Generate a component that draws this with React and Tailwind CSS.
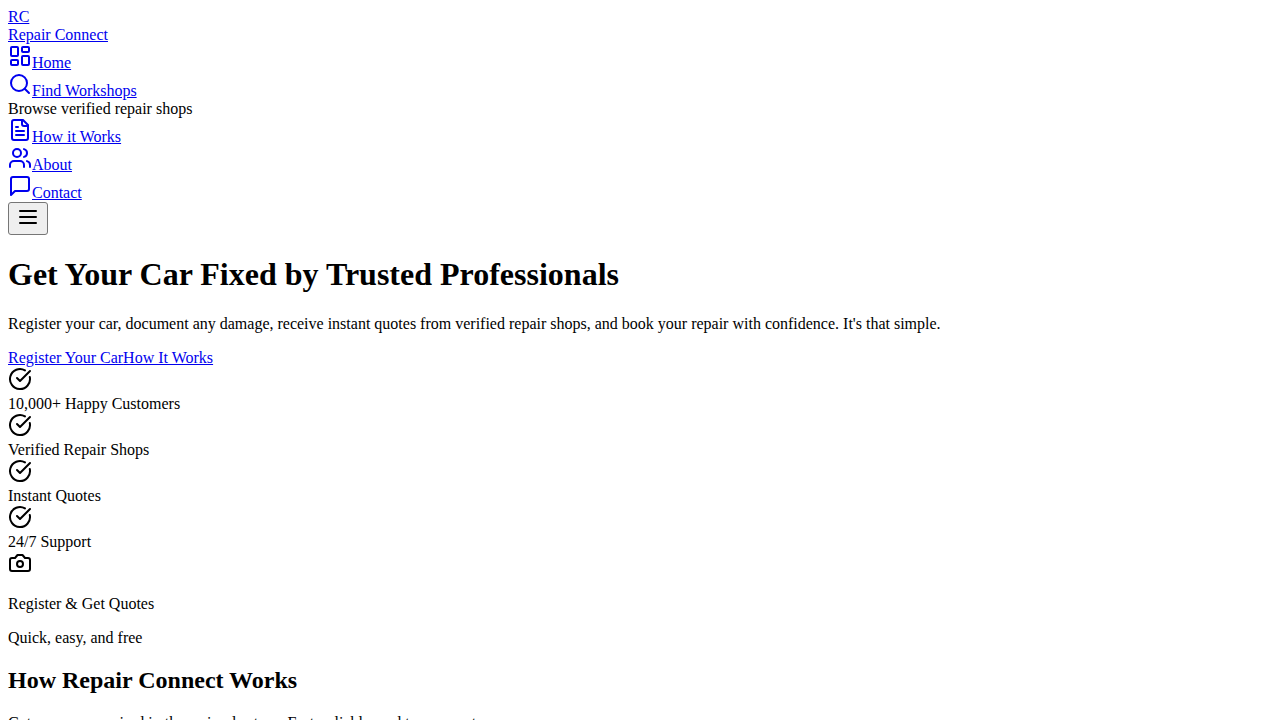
import React from "react";

function Icon({ children }) {
  return (
    <svg
      className="inline size-6 align-baseline"
      viewBox="0 0 24 24"
      fill="none"
      stroke="currentColor"
      strokeWidth="2"
      strokeLinecap="round"
      strokeLinejoin="round"
      aria-hidden="true"
    >
      {children}
    </svg>
  );
}

const icons = {
  dashboard: (
    <Icon>
      <rect width="7" height="9" x="3" y="3" rx="1" />
      <rect width="7" height="5" x="14" y="3" rx="1" />
      <rect width="7" height="9" x="14" y="12" rx="1" />
      <rect width="7" height="5" x="3" y="16" rx="1" />
    </Icon>
  ),
  search: (
    <Icon>
      <circle cx="11" cy="11" r="8" />
      <path d="m21 21-4.3-4.3" />
    </Icon>
  ),
  file: (
    <Icon>
      <path d="M15 2H6a2 2 0 0 0-2 2v16a2 2 0 0 0 2 2h12a2 2 0 0 0 2-2V7Z" />
      <path d="M14 2v4a2 2 0 0 0 2 2h4" />
      <path d="M10 9H8" />
      <path d="M16 13H8" />
      <path d="M16 17H8" />
    </Icon>
  ),
  users: (
    <Icon>
      <path d="M16 21v-2a4 4 0 0 0-4-4H6a4 4 0 0 0-4 4v2" />
      <circle cx="9" cy="7" r="4" />
      <path d="M22 21v-2a4 4 0 0 0-3-3.87" />
      <path d="M16 3.13a4 4 0 0 1 0 7.75" />
    </Icon>
  ),
  message: (
    <Icon>
      <path d="M21 15a2 2 0 0 1-2 2H7l-4 4V5a2 2 0 0 1 2-2h14a2 2 0 0 1 2 2z" />
    </Icon>
  ),
  menu: (
    <Icon>
      <path d="M4 6h16" />
      <path d="M4 12h16" />
      <path d="M4 18h16" />
    </Icon>
  ),
  check: (
    <Icon>
      <path d="M21.801 10A10 10 0 1 1 17 3.335" />
      <path d="m9 11 3 3L22 4" />
    </Icon>
  ),
  camera: (
    <Icon>
      <path d="M14.5 4h-5L7 7H4a2 2 0 0 0-2 2v9a2 2 0 0 0 2 2h16a2 2 0 0 0 2-2V9a2 2 0 0 0-2-2h-3l-2.5-3z" />
      <circle cx="12" cy="13" r="3" />
    </Icon>
  ),
};

const navItems = [
  { label: "Home", icon: icons.dashboard },
  { label: "Find Workshops", icon: icons.search, note: "Browse verified repair shops" },
  { label: "How it Works", icon: icons.file },
  { label: "About", icon: icons.users },
  { label: "Contact", icon: icons.message },
];

const benefits = [
  "10,000+ Happy Customers",
  "Verified Repair Shops",
  "Instant Quotes",
  "24/7 Support",
];

function TextLink({ children }) {
  return (
    <a href="#" className="text-[#0000ee] underline">
      {children}
    </a>
  );
}

export default function App() {
  return (
    <div className="bg-white p-2 font-['Liberation_Serif','Times_New_Roman',serif] text-base leading-[18px] text-black">
      <header>
        <a href="#" className="text-[#0000ee] underline">
          <div>RC</div>
          <div>Repair Connect</div>
        </a>
        <nav>
          {navItems.map((item) => (
            <div key={item.label}>
              <TextLink>
                {item.icon}
                {item.label}
              </TextLink>
              {item.note && <div>{item.note}</div>}
            </div>
          ))}
        </nav>
        <button
          type="button"
          aria-label="Open menu"
          className="flex rounded-[3px] border border-[#767676] bg-[#efefef] px-[7px] pt-0.5 pb-[5px]"
        >
          {icons.menu}
        </button>
      </header>
      <main>
        <section>
          <h1 className="mt-[21px] mb-[22px] text-[32px] leading-[37px] font-bold">
            Get Your Car Fixed by Trusted Professionals
          </h1>
          <p className="mb-4">
            Register your car, document any damage, receive instant quotes from verified repair
            shops, and book your repair with confidence. It's that simple.
          </p>
          <div>
            <TextLink>Register Your Car</TextLink>
            <TextLink>How It Works</TextLink>
          </div>
          {benefits.map((benefit) => (
            <div key={benefit}>
              {icons.check}
              <div>{benefit}</div>
            </div>
          ))}
          <div>
            {icons.camera}
            <p className="my-4">Register &amp; Get Quotes</p>
            <p>Quick, easy, and free</p>
          </div>
        </section>
        <section>
          <h2 className="my-5 text-2xl leading-[27px] font-bold">How Repair Connect Works</h2>
          <p>Get your car repaired in three simple steps. Fast, reliable, and transparent.</p>
        </section>
      </main>
    </div>
  );
}
